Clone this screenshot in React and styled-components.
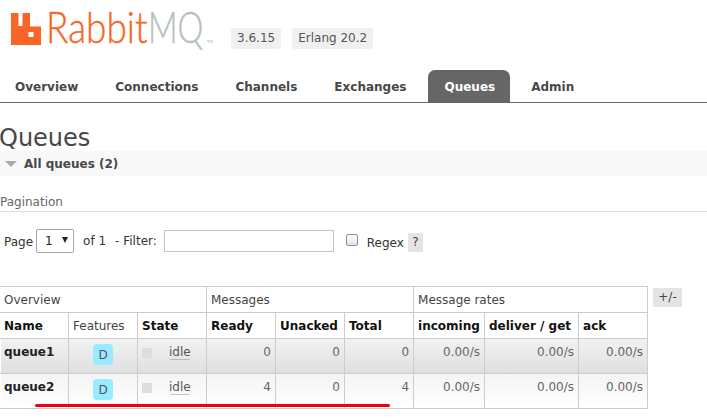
import React from 'react';
import styled, { createGlobalStyle } from 'styled-components';

const Global = createGlobalStyle`
    html, body { margin: 0; padding: 0; background: #fff; }
    body { width: 707px; height: 418px; overflow: hidden; font-family: "DejaVu Sans", Verdana, sans-serif; font-size: 12px; color: #484848; }
`;

const Page = styled.div`
    position: relative;
    width: 707px;
    height: 418px;
    overflow: hidden;
`;

const Header = styled.div`
    height: 70px;
    display: flex;
    align-items: flex-start;
    padding: 11px 0 0 11px;
    box-sizing: border-box;
`;

const Logo = styled.div`
    display: flex;
    align-items: flex-end;
    height: 34px;
    width: 204px;
`;

const LogoWord = styled.span`
    display: block;
    flex: none;
    width: ${props => props.width}px;
    margin-bottom: 3px;
    font-family: "Lato", "Liberation Sans", Arial, sans-serif;
    font-weight: 300;
    font-size: 44px;
    line-height: 32px;
    color: ${props => props.color};
    -webkit-text-stroke: 0.4px ${props => props.color};
    transform: scaleX(${props => props.scale});
    transform-origin: left bottom;
`;

const Trademark = styled.span`
    font-size: 4px;
    color: #b4c0ba;
    position: absolute;
    left: 207px;
    top: 39px;
`;

const Versions = styled.div`
    display: flex;
    gap: 11px;
    margin: 17px 0 0 16px;
`;

const Version = styled.span`
    background: #f0f0f0;
    border-radius: 3px;
    padding: 3px 6px;
    font-size: 12px;
    line-height: 15px;
    color: #555;
`;

const Nav = styled.div`
    height: 33px;
    border-bottom: 1px solid #666;
    box-sizing: border-box;
    display: flex;
    padding-left: 15px;
`;

const Tab = styled.div`
    box-sizing: border-box;
    height: 32px;
    margin-right: ${props => props.gap}px;
    padding: 0 ${props => props.active ? '15px 0 16px' : '0'};
    margin-left: ${props => props.active ? -15 : 0}px;
    border-radius: ${props => props.active ? '7px 7px 0 0' : '0'};
    background: ${props => props.active ? '#666' : 'transparent'};
    color: ${props => props.active ? '#fff' : '#484848'};
    font-size: 12px;
    font-weight: bold;
    line-height: 34px;
`;

const Title = styled.h1`
    margin: 0 0 0 -1px;
    padding-top: 21px;
    height: 27px;
    font-size: 24px;
    font-weight: normal;
    line-height: 28px;
    color: #484848;
`;

const SectionBar = styled.div`
    height: 25px;
    background: #f8f8f8;
    display: flex;
    align-items: center;
    gap: 7px;
    padding-left: 5px;
    font-size: 12px;
    font-weight: bold;
    color: #484848;
`;

const Arrow = styled.span`
    width: 0;
    height: 0;
    border-left: 6px solid transparent;
    border-right: 6px solid transparent;
    border-top: 6px solid #aaa;
`;

const PaginationTitle = styled.div`
    margin-top: 18px;
    height: 17px;
    line-height: 16px;
    font-size: 12px;
    color: #666;
    border-bottom: 1px solid #ddd;
`;

const FilterRow = styled.div`
    display: flex;
    align-items: center;
    height: 24px;
    margin-top: 17px;
    padding-left: 4px;
    font-size: 12px;
    color: #333;
`;

const Label = styled.span`
    margin-left: ${props => props.left || 0}px;
    margin-top: ${props => props.top || 0}px;
    white-space: pre;
`;

const PageSelect = styled.span`
    box-sizing: border-box;
    width: 38px;
    height: 24px;
    margin-left: 3px;
    border: 1px solid #a6a6a6;
    border-radius: 2px;
    display: flex;
    align-items: center;
    justify-content: space-between;
    padding: 0 5px 0 8px;
    color: #222;
`;

const Caret = styled.span`
    width: 0;
    height: 0;
    border-left: 3.5px solid transparent;
    border-right: 3.5px solid transparent;
    border-top: 6px solid #222;
    margin-top: -2px;
`;

const FilterInput = styled.span`
    box-sizing: border-box;
    width: 170px;
    height: 22px;
    margin-left: 7px;
    border: 1px solid #c4c4c4;
    background: #fff;
`;

const Check = styled.span`
    box-sizing: border-box;
    width: 12px;
    height: 12px;
    margin-left: 12px;
    margin-top: -3px;
    border: 1px solid #8f8f8f;
    border-radius: 2px;
    background: linear-gradient(#fdfdfd, #e4e4e4);
`;

const Help = styled.span`
    width: 15px;
    height: 19px;
    margin-left: 4px;
    margin-top: 2px;
    background: #e4e4e4;
    color: #5a2a7a;
    font-size: 12px;
    line-height: 19px;
    text-align: center;
`;

const TableRow = styled.div`
    display: flex;
    align-items: flex-start;
    margin-top: 33px;
`;

const Table = styled.table`
    border-collapse: collapse;
    table-layout: fixed;
    width: 648px;
    font-size: 12px;
    color: #484848;
`;

const GroupHead = styled.th`
    border: 1px solid #ccc;
    height: 25px;
    padding: 0 4px;
    text-align: left;
    font-weight: normal;
    color: #444;
    font-size: 12px;
    white-space: nowrap;
    &:first-child { border-left-color: transparent; padding-left: 3px; }
`;

const ColHead = styled.th`
    border: 1px solid #ccc;
    height: 25px;
    padding: 0 4px;
    text-align: left;
    white-space: nowrap;
    font-weight: ${props => props.plain ? 'normal' : 'bold'};
    color: ${props => props.plain ? '#444' : '#111'};
    font-size: 12px;
    &:first-child { border-left-color: transparent; padding-left: 3px; }
`;

const Row = styled.tr`
    background: ${props => props.odd
        ? 'linear-gradient(#f2f2f2, #dedede)'
        : 'linear-gradient(#f4f4f4, #ffffff)'};
`;

const Cell = styled.td`
    border: 1px solid #ccc;
    height: 35px;
    padding: 6px 4px 0;
    box-sizing: border-box;
    vertical-align: top;
    text-align: ${props => props.align || 'left'};
    color: #666;
    line-height: 15px;
`;

const NameCell = styled(Cell)`
    font-weight: bold;
    color: #222;
    font-size: 12px;
    &:first-child { border-left-color: transparent; padding-left: 3px; }
`;

const FeatureCell = styled(Cell)`
    text-align: center;
    padding-top: 5px;
`;

const Badge = styled.span`
    display: inline-block;
    width: 20px;
    height: 21px;
    border-radius: 4px;
    background: #99ebff;
    color: #555;
    line-height: 22px;
    text-align: center;
`;

const StateWrap = styled.div`
    display: flex;
    align-items: center;
`;

const StateBox = styled.span`
    width: 10px;
    height: 10px;
    background: #ddd;
    margin-right: 17px;
`;

const Idle = styled.span`
    color: #555;
    line-height: 14px;
    border-bottom: 1px dotted #888;
    border-radius: 0 0 3px 3px;
`;

const Toggle = styled.span`
    width: 29px;
    height: 19px;
    margin-left: 5px;
    margin-top: 2px;
    background: #e4e4e4;
    text-align: center;
    line-height: 19px;
    color: #444;
`;

const Underline = styled.div`
    position: absolute;
    left: 35px;
    top: 404px;
    width: 355px;
    height: 3px;
    border-radius: 2px;
    background: #f0000f;
`;

const queues = [
    { name: 'queue1', ready: 0, unacked: 0, total: 0 },
    { name: 'queue2', ready: 4, unacked: 0, total: 4 },
];

const widths = [68, 69, 69, 69, 69, 69, 71, 94, 69];

export default function App() {
    return (
        <Page>
            <Global />
            <Header>
                <Logo>
                    <svg width="30" height="33" viewBox="0 0 30 33" style={{ flex: 'none', marginRight: 5 }}>
                        <path fill="#f76627" fillRule="evenodd" d="M0 1h7.5v13h4V1H19v13.5h11V33H0z M17.5 20h5v5h-5z" />
                    </svg>
                    <LogoWord color="#f76627" width={102} scale={0.84}>Rabbit</LogoWord>
                    <LogoWord color="#b4c0ba" width={58} scale={0.74}>MQ</LogoWord>
                </Logo>
                <Trademark>TM</Trademark>
                <Versions>
                    <Version>3.6.15</Version>
                    <Version>Erlang 20.2</Version>
                </Versions>
            </Header>
            <Nav>
                <Tab gap={37}>Overview</Tab>
                <Tab gap={37}>Connections</Tab>
                <Tab gap={37}>Channels</Tab>
                <Tab gap={37}>Exchanges</Tab>
                <Tab gap={21} active>Queues</Tab>
                <Tab gap={0}>Admin</Tab>
            </Nav>
            <Title>Queues</Title>
            <SectionBar><Arrow />All queues (2)</SectionBar>
            <PaginationTitle>Pagination</PaginationTitle>
            <FilterRow>
                <Label top={2}>Page</Label>
                <PageSelect>1<Caret /></PageSelect>
                <Label left={9}>of 1</Label>
                <Label left={9}>- Filter:</Label>
                <FilterInput />
                <Check />
                <Label left={9} top={3}>Regex</Label>
                <Help>?</Help>
            </FilterRow>
            <TableRow>
                <Table>
                    <colgroup>
                        {widths.map((w, i) => <col key={i} style={{ width: w }} />)}
                    </colgroup>
                    <thead>
                        <tr>
                            <GroupHead colSpan={3}>Overview</GroupHead>
                            <GroupHead colSpan={3}>Messages</GroupHead>
                            <GroupHead colSpan={3}>Message rates</GroupHead>
                        </tr>
                        <tr>
                            <ColHead>Name</ColHead>
                            <ColHead plain>Features</ColHead>
                            <ColHead>State</ColHead>
                            <ColHead>Ready</ColHead>
                            <ColHead>Unacked</ColHead>
                            <ColHead>Total</ColHead>
                            <ColHead>incoming</ColHead>
                            <ColHead>deliver / get</ColHead>
                            <ColHead>ack</ColHead>
                        </tr>
                    </thead>
                    <tbody>
                        {queues.map((q, i) => (
                            <Row key={q.name} odd={i === 0}>
                                <NameCell>{q.name}</NameCell>
                                <FeatureCell><Badge>D</Badge></FeatureCell>
                                <Cell>
                                    <StateWrap><StateBox /><Idle>idle</Idle></StateWrap>
                                </Cell>
                                <Cell align="right">{q.ready}</Cell>
                                <Cell align="right">{q.unacked}</Cell>
                                <Cell align="right">{q.total}</Cell>
                                <Cell align="right">0.00/s</Cell>
                                <Cell align="right">0.00/s</Cell>
                                <Cell align="right">0.00/s</Cell>
                            </Row>
                        ))}
                    </tbody>
                </Table>
                <Toggle>+/-</Toggle>
            </TableRow>
            <Underline />
        </Page>
    );
}
